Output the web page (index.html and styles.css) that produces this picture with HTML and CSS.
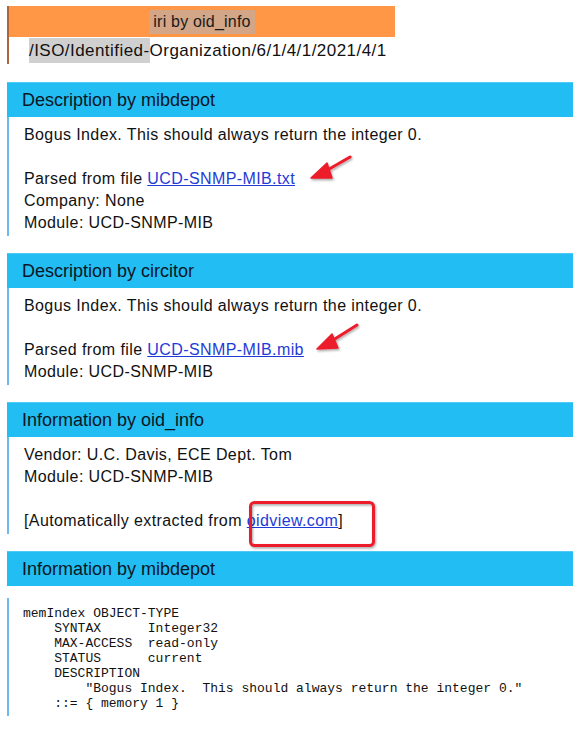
FILE: index.html
```html
<!DOCTYPE html>
<html>
<head>
<meta charset="utf-8">
<link rel="stylesheet" href="styles.css">
</head>
<body>
<div class="page">
  <div class="iri">
    <div class="iri-title"><span class="iri-hl">iri by oid_info</span></div>
    <div class="iri-path"><span class="sel">/ISO/Identified-</span>Organization/6/1/4/1/2021/4/1</div>
  </div>

  <div class="section">
    <div class="sec-head">Description by mibdepot</div>
    <div class="sec-body">
      Bogus Index. This should always return the integer 0.<br><br>
      Parsed from file <a href="#">UCD-SNMP-MIB.txt</a><br>
      Company: None<br>
      Module: UCD-SNMP-MIB
    </div>
  </div>

  <div class="section">
    <div class="sec-head">Description by circitor</div>
    <div class="sec-body">
      Bogus Index. This should always return the integer 0.<br><br>
      Parsed from file <a href="#">UCD-SNMP-MIB.mib</a><br>
      Module: UCD-SNMP-MIB
    </div>
  </div>

  <div class="section">
    <div class="sec-head">Information by oid_info</div>
    <div class="sec-body">
      Vendor: U.C. Davis, ECE Dept. Tom<br>
      Module: UCD-SNMP-MIB<br><br>
      [Automatically extracted from <a href="#">oidview.com</a>]
    </div>
  </div>

  <div class="section last">
    <div class="sec-head">Information by mibdepot</div>
    <pre class="mib">memIndex OBJECT-TYPE
    SYNTAX      Integer32
    MAX-ACCESS  read-only
    STATUS      current
    DESCRIPTION
        "Bogus Index.  This should always return the integer 0."
    ::= { memory 1 }</pre>
  </div>

  <svg class="annot" width="573" height="734" viewBox="0 0 573 734">
    <defs>
      <filter id="sh" x="-20%" y="-20%" width="140%" height="140%">
        <feDropShadow dx="1" dy="1.5" stdDeviation="1.2" flood-color="#000" flood-opacity="0.35"/>
      </filter>
    </defs>
    <g filter="url(#sh)" fill="#ec1c2b" stroke="#ec1c2b" stroke-linecap="round" stroke-linejoin="round">
      <line x1="350" y1="157" x2="324" y2="172" stroke-width="3"/>
      <polygon points="311,178 327,163 332,178" stroke-width="1.5"/>
      <line x1="357" y1="325" x2="330" y2="342" stroke-width="3"/>
      <polygon points="317,349 332,334 338,348" stroke-width="1.5"/>
      <rect x="250.5" y="502.5" width="123" height="43" rx="4" fill="none" stroke-width="3"/>
    </g>
  </svg>
</div>
</body>
</html>
```

FILE: styles.css
```css
html, body {
  margin: 0;
  padding: 0;
  background: #fff;
}
.page {
  position: relative;
  padding: 6px 0 0 7px;
  font-family: "Liberation Sans", Arial, sans-serif;
  font-size: 16px;
  color: #111;
}
.iri {
  width: 386px;
  border-left: 2px solid #a9663f;
}
.iri-title {
  height: 31px;
  background: #ff9747;
  display: flex;
  align-items: center;
  justify-content: center;
}
.iri-hl {
  background: #d2a686;
  padding: 3px 4px;
  line-height: 18px;
  font-size: 16px;
  letter-spacing: 0.2px;
  color: #1a1a1a;
}
.iri-path {
  height: 27px;
  line-height: 27px;
  padding-left: 20px;
  font-size: 17px;
  letter-spacing: 0.45px;
}
.sel {
  background: #d0d0d0;
  padding: 3px 0;
}
.section {
  margin-top: 18px;
}
.section + .section {
  margin-top: 17px;
}
.sec-head {
  height: 34px;
  line-height: 34px;
  background: #21bdf3;
  border-top: 1px solid #4fcaf5;
  padding-left: 15px;
  font-size: 18px;
  color: #0c1624;
}
.sec-body {
  border-left: 2px solid #6db8ec;
  padding: 7px 0 2px 15px;
  line-height: 22px;
  letter-spacing: 0.4px;
}
a {
  color: #1e3bd8;
  text-decoration: underline;
}
.mib {
  margin: 12px 0 0 0;
  border-left: 2px solid #6db8ec;
  padding: 8px 0 5px 14px;
  font-family: "Liberation Mono", "Courier New", monospace;
  font-size: 13px;
  line-height: 15px;
  color: #111;
}
.annot {
  position: absolute;
  left: 0;
  top: 0;
  pointer-events: none;
}
```
